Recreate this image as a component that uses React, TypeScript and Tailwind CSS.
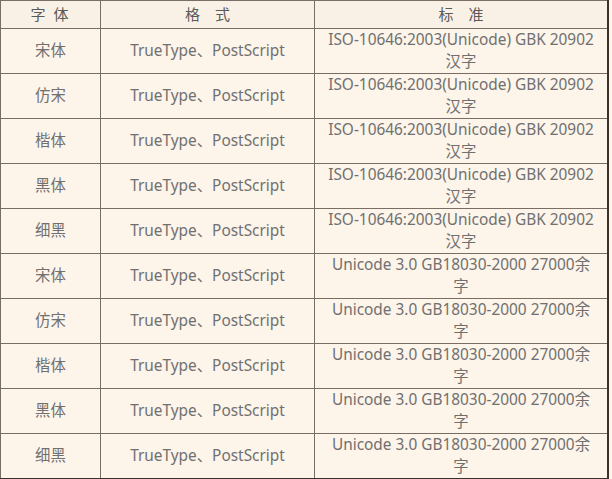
const rows = [
  { name: "宋体", std: ["ISO-10646:2003(Unicode) GBK 20902", "汉字"] },
  { name: "仿宋", std: ["ISO-10646:2003(Unicode) GBK 20902", "汉字"] },
  { name: "楷体", std: ["ISO-10646:2003(Unicode) GBK 20902", "汉字"] },
  { name: "黑体", std: ["ISO-10646:2003(Unicode) GBK 20902", "汉字"] },
  { name: "细黑", std: ["ISO-10646:2003(Unicode) GBK 20902", "汉字"] },
  { name: "宋体", std: ["Unicode 3.0 GB18030-2000 27000余", "字"] },
  { name: "仿宋", std: ["Unicode 3.0 GB18030-2000 27000余", "字"] },
  { name: "楷体", std: ["Unicode 3.0 GB18030-2000 27000余", "字"] },
  { name: "黑体", std: ["Unicode 3.0 GB18030-2000 27000余", "字"] },
  { name: "细黑", std: ["Unicode 3.0 GB18030-2000 27000余", "字"] },
];

export default function App() {
  return (
    <div className="w-[612px] h-[479px] overflow-hidden bg-[#fdf4ea] font-['Noto_Sans','Noto_Sans_CJK_SC',sans-serif]">
      <table className="w-[609px] border-collapse table-fixed border-r-2 border-r-[#3a332d] border-b-2 border-b-[#3a332d]">
        <colgroup>
          <col className="w-[100px]" />
          <col className="w-[214px]" />
          <col />
        </colgroup>
        <thead>
          <tr className="h-[28px] bg-[#f9f1e6] text-[15px] text-[#5a5a5a] border-t border-[#5a5048]">
            <th className="font-normal border border-[#7a6e64] tracking-[2px]">字 体</th>
            <th className="font-normal border border-[#7a6e64]">格　式</th>
            <th className="font-normal border border-[#7a6e64]">标　准</th>
          </tr>
        </thead>
        <tbody>
          {rows.map((r, i) => (
            <tr key={i} className="h-[45px] text-[15.4px] leading-[22px] text-[#707070]">
              <td className="border border-[#7a6e64] text-center">{r.name}</td>
              <td className="border border-[#7a6e64] text-center">TrueType、PostScript</td>
              <td className="border border-[#7a6e64] text-center">
                <div>{r.std[0]}</div>
                <div>{r.std[1]}</div>
              </td>
            </tr>
          ))}
        </tbody>
      </table>
    </div>
  );
}
